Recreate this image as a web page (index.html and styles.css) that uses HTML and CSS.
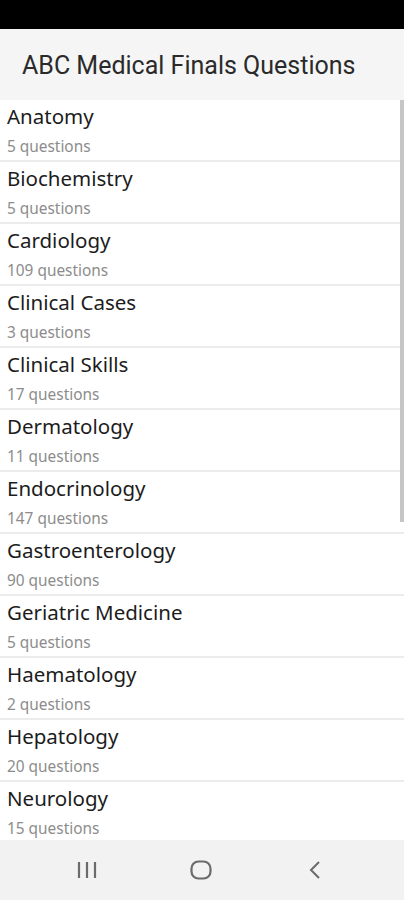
FILE: index.html
```html
<!DOCTYPE html>
<html>
<head lang="en">
    <meta charset="UTF-8">
    <title>ABC Medical Finals Questions</title>
    <link rel="stylesheet" href="styles.css">
</head>
<body>
<div id="phone">
    <div id="status"></div>
    <div id="header">
        <h1>ABC Medical Finals Questions</h1>
    </div>
    <div id="list">
        <ul>
            <li><p class="name">Anatomy</p><p class="count">5 questions</p></li>
            <li><p class="name">Biochemistry</p><p class="count">5 questions</p></li>
            <li><p class="name">Cardiology</p><p class="count">109 questions</p></li>
            <li><p class="name">Clinical Cases</p><p class="count">3 questions</p></li>
            <li><p class="name">Clinical Skills</p><p class="count">17 questions</p></li>
            <li><p class="name">Dermatology</p><p class="count">11 questions</p></li>
            <li><p class="name">Endocrinology</p><p class="count">147 questions</p></li>
            <li><p class="name">Gastroenterology</p><p class="count">90 questions</p></li>
            <li><p class="name">Geriatric Medicine</p><p class="count">5 questions</p></li>
            <li><p class="name">Haematology</p><p class="count">2 questions</p></li>
            <li><p class="name">Hepatology</p><p class="count">20 questions</p></li>
            <li><p class="name">Neurology</p><p class="count">15 questions</p></li>
        </ul>
        <span id="scrollbar"></span>
    </div>
    <div id="navbar">
        <span class="key">
            <svg width="22" height="18" viewBox="0 0 22 18">
                <path d="M3 1v16M11 1v16M19 1v16" stroke="#6b6b6b" stroke-width="2.2" fill="none"/>
            </svg>
        </span>
        <span class="key">
            <svg width="22" height="20" viewBox="0 0 22 20">
                <rect x="1.5" y="1.5" width="19" height="17" rx="7" stroke="#6b6b6b" stroke-width="2.2" fill="none"/>
            </svg>
        </span>
        <span class="key">
            <svg width="14" height="20" viewBox="0 0 14 20">
                <path d="M11 2L3 10l8 8" stroke="#6b6b6b" stroke-width="2" fill="none"/>
            </svg>
        </span>
    </div>
</div>
</body>
</html>
```
FILE: styles.css
```css
* {
    margin: 0;
    padding: 0;
}

html, body {
    background: #f2f2f2;
}

body {
    font-family: "Noto Sans", Roboto, sans-serif;
}

ul {
    list-style: none;
}

#phone {
    width: 404px;
    height: 900px;
    display: flex;
    flex-direction: column;
}

#status {
    height: 29px;
    background-color: #000;
}

#header {
    height: 71px;
    background-color: #f5f5f5;
    padding: 22px 0 0 22px;
    box-sizing: border-box;
}

#header h1 {
    font-family: Roboto, "Noto Sans", sans-serif;
    font-size: 25px;
    line-height: 30px;
    font-weight: normal;
    color: #2a2a2a;
}

#list {
    height: 740px;
    overflow: hidden;
    position: relative;
    background-color: #ececec;
}

#list li {
    height: 60px;
    margin-bottom: 2px;
    padding: 2px 0 0 7px;
    box-sizing: border-box;
    background-color: #fff;
}

#list .name {
    font-size: 20.5px;
    line-height: 28px;
    color: #1c1c1c;
}

#list .count {
    margin-top: 6px;
    font-size: 15.4px;
    line-height: 22px;
    color: #8c8c8c;
}

#scrollbar {
    position: absolute;
    right: 0;
    top: 0;
    width: 4px;
    height: 422px;
    background-color: #c6c6c6;
}

#navbar {
    height: 60px;
    background-color: #f2f2f2;
    display: flex;
    align-items: center;
    gap: 74px;
    padding-left: 67px;
}

.key {
    display: flex;
    width: 40px;
    justify-content: center;
}
```
